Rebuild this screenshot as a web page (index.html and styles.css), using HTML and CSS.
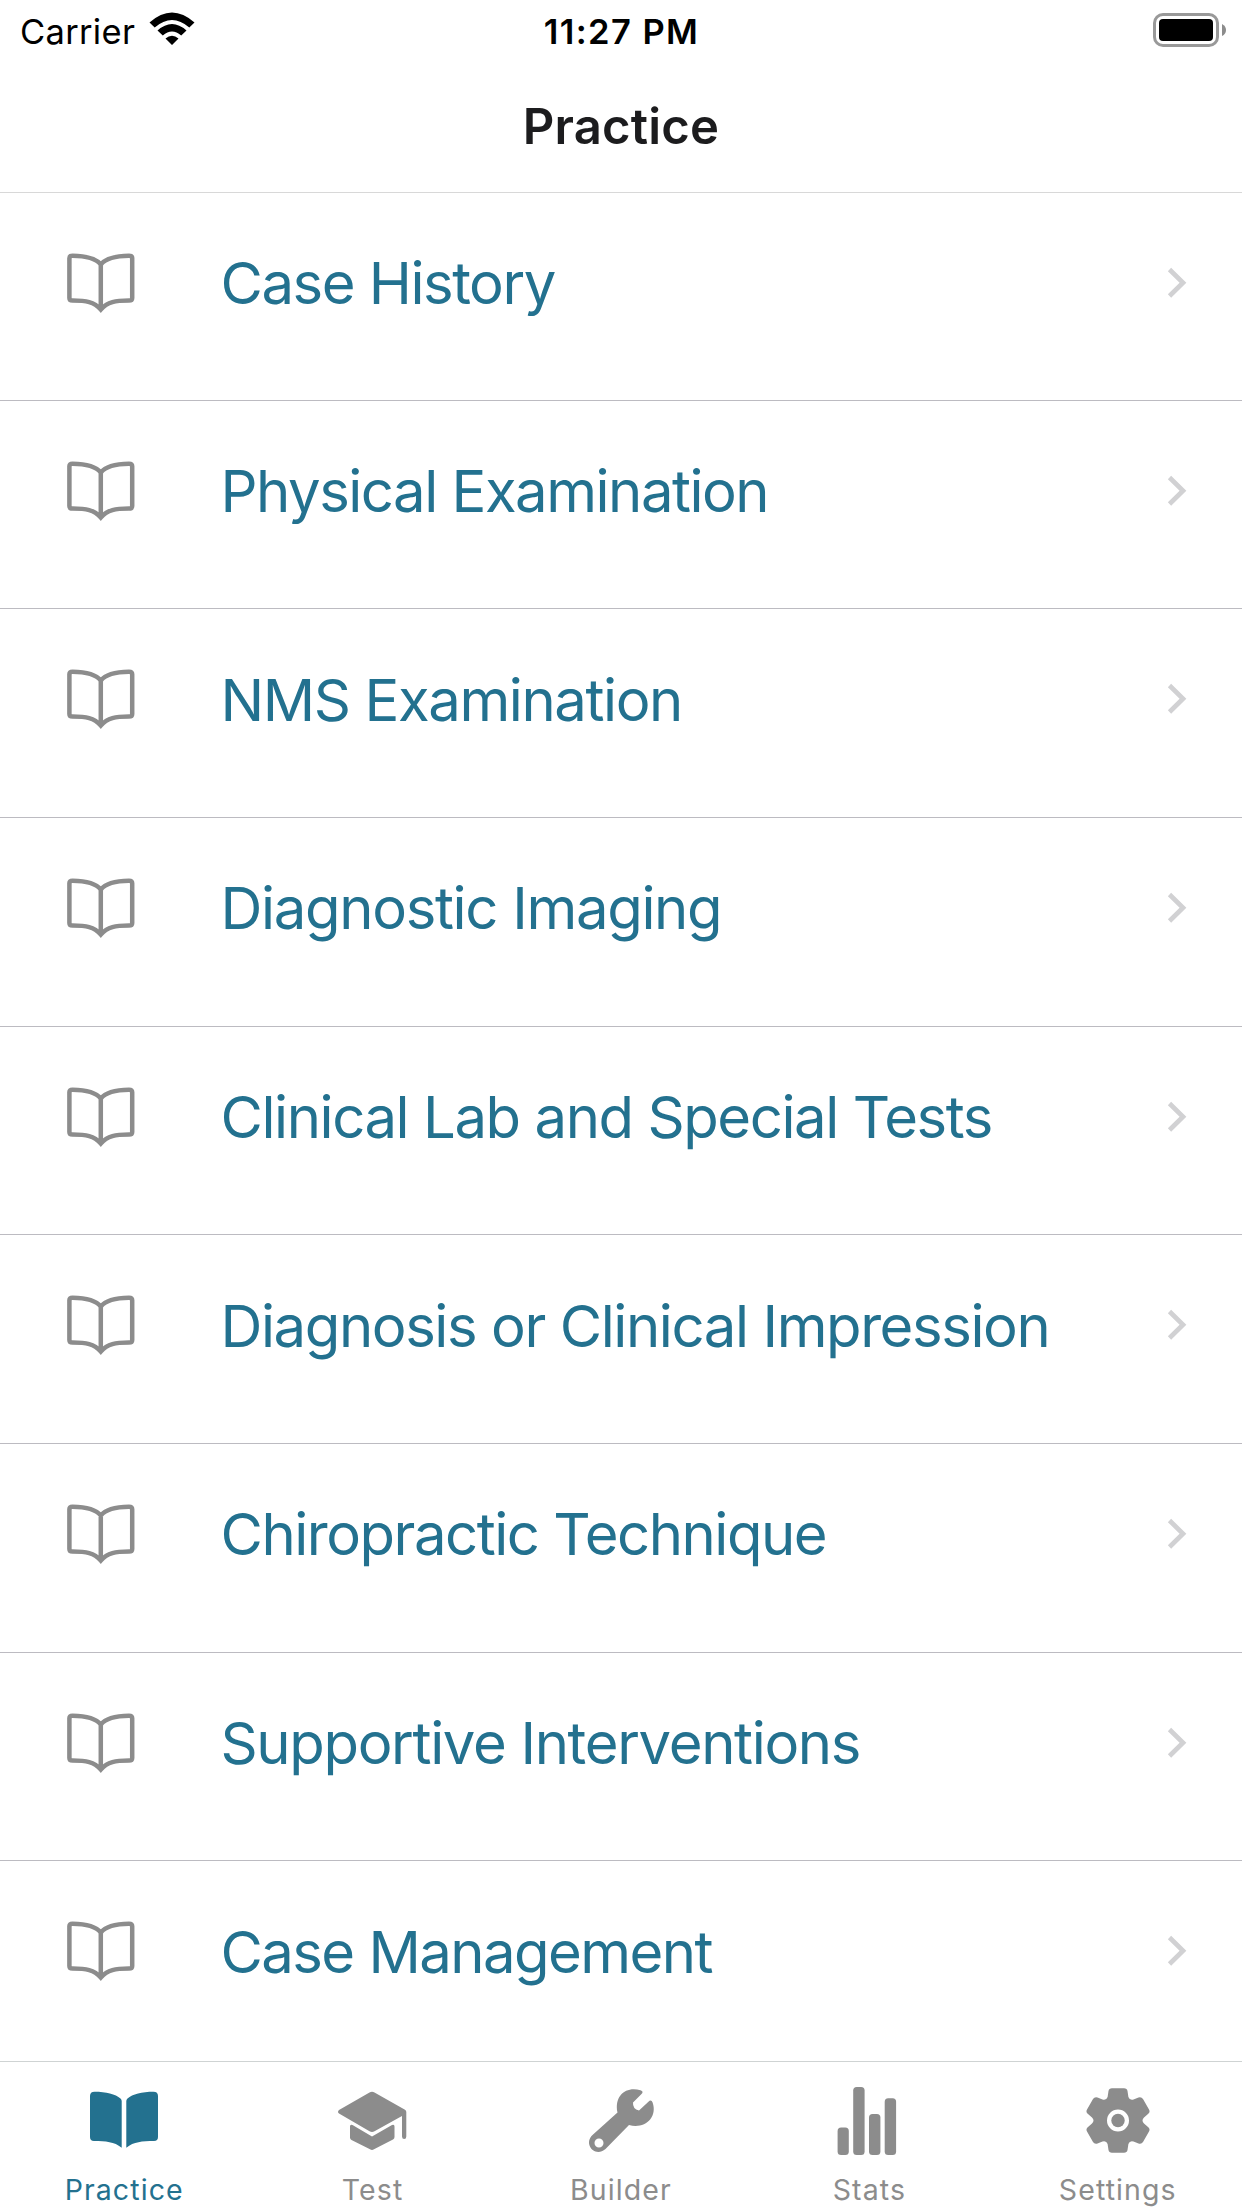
FILE: index.html
```html
<!DOCTYPE html>
<html lang="en">
<head>
<meta charset="utf-8">
<title>Practice</title>
<link rel="stylesheet" href="styles.css">
</head>
<body>
<svg class="defs" aria-hidden="true">
  <symbol id="book" viewBox="0 0 70 62">
    <path d="M34.800 12.500C30 6.500 20 4 6.500 3.800Q3.400 3.800 3.400 6.300V46Q3.400 48.600 6.500 48.600C20 48.600 28 49.600 34.800 57.500C41.600 49.600 49.600 48.600 63 48.600Q66.200 48.600 66.200 46V6.300Q66.200 3.800 63 3.800C49.600 4 39.600 6.500 34.800 12.500V57" fill="none" stroke="currentColor" stroke-width="4.500" stroke-miterlimit="10"/>
  </symbol>
  <symbol id="chevron" viewBox="0 0 20 32">
    <path d="M2.500 2.500L16 15.700L2.500 29" fill="none" stroke="currentColor" stroke-width="4.700"/>
  </symbol>
</svg>
<div class="screen">
  <header class="status">
    <div class="carrier"><span>Carrier</span>
      <svg class="wifi" viewBox="0 0 46 34"><path d="M.5 10.500Q23-9.500 45.500 10.500L40.300 15.600Q23 .5 5.700 15.600ZM8.500 18.500Q23 5.500 37.500 18.500L32.200 23.600Q23 15.500 13.800 23.600ZM16.500 26.500Q23 20.800 29.500 26.500L23 33Z"/></svg>
    </div>
    <div class="time">11:27 PM</div>
    <svg class="battery" viewBox="0 0 74 34"><rect x="1.500" y="1.500" width="63" height="31" rx="8.500" fill="none" stroke="#999" stroke-width="3"/><rect x="6" y="6" width="54" height="22" rx="4"/><path d="M69 11Q73 13 73 17T69 23Z" fill="#8c8c8c"/></svg>
  </header>
  <h1 class="title">Practice</h1>
  <main class="list">
    <a class="row"><svg class="book"><use href="#book"/></svg><span class="label r1">Case History</span><svg class="chevron"><use href="#chevron"/></svg></a>
    <a class="row"><svg class="book"><use href="#book"/></svg><span class="label r2">Physical Examination</span><svg class="chevron"><use href="#chevron"/></svg></a>
    <a class="row"><svg class="book"><use href="#book"/></svg><span class="label r3">NMS Examination</span><svg class="chevron"><use href="#chevron"/></svg></a>
    <a class="row"><svg class="book"><use href="#book"/></svg><span class="label r4">Diagnostic Imaging</span><svg class="chevron"><use href="#chevron"/></svg></a>
    <a class="row"><svg class="book"><use href="#book"/></svg><span class="label r5">Clinical Lab and Special Tests</span><svg class="chevron"><use href="#chevron"/></svg></a>
    <a class="row"><svg class="book"><use href="#book"/></svg><span class="label r6">Diagnosis or Clinical Impression</span><svg class="chevron"><use href="#chevron"/></svg></a>
    <a class="row"><svg class="book"><use href="#book"/></svg><span class="label r7">Chiropractic Technique</span><svg class="chevron"><use href="#chevron"/></svg></a>
    <a class="row"><svg class="book"><use href="#book"/></svg><span class="label r8">Supportive Interventions</span><svg class="chevron"><use href="#chevron"/></svg></a>
    <a class="row"><svg class="book"><use href="#book"/></svg><span class="label r9">Case Management</span><svg class="chevron"><use href="#chevron"/></svg></a>
  </main>
  <nav class="tabs">
    <a class="tab active"><svg class="icon" viewBox="0 0 80 80"><path d="M10.500 11.700C22 11.700 31.500 14 36.500 18.500Q37.700 19.500 37.700 21V67.700C30 61.500 22 61.300 10 61Q6 61 6 57V16Q6 11.700 10.500 11.700ZM69.500 11.700C58 11.700 48.500 14 43.500 18.500Q42.300 19.500 42.300 21V67.700C50 61.500 58 61.300 70 61Q74 61 74 57V16Q74 11.700 69.500 11.700Z"/></svg><span>Practice</span></a>
    <a class="tab"><svg class="icon" viewBox="1 0 80 80"><path d="M37.500 12.500Q40 11 42.500 12.500L73 29.700Q74.300 30.500 74.300 32V56.500Q74.300 59 72.200 59T70 56.500V36L42.500 51.300Q40 52.800 37.500 51.300L7 33.500Q5 32 7 30Z"/><path d="M20.500 45Q18 44 18 46.500V57.500Q18 59 19.500 60L38 69.300Q40 70.500 42 69.300L61 59.500Q62.500 58.500 62.500 57V46.500Q62.500 44 60 45L40 56.500Z"/></svg><span>Test</span></a>
    <a class="tab"><svg class="icon" viewBox="-2 0 80 80"><path fill-rule="evenodd" d="M57.500 10.200Q61 11.500 58.500 14L50 22.500Q49.500 29 56 30.500L66.500 20.700Q68.700 19.800 69.600 22.500C75 38 61 49.500 46 45L22.500 69C12 78 0 64 9.500 55L34.500 32.500C31 15 43.500 6 57.500 10.200ZM16 58.500A4.500 4.500 0 1 0 16 67.500A4.500 4.500 0 1 0 16 58.500Z"/></svg><span>Builder</span></a>
    <a class="tab"><svg class="icon" viewBox="2 0 80 80"><rect x="10.600" y="47.500" width="11.200" height="27.500" rx="3.500"/><rect x="26.200" y="7" width="11.400" height="68" rx="3.500"/><rect x="42" y="34" width="11.400" height="41" rx="3.500"/><rect x="57.700" y="18.300" width="11.400" height="56.700" rx="3.500"/></svg><span>Stats</span></a>
    <a class="tab"><svg class="icon" viewBox="0 0 80 80"><path fill-rule="evenodd" d="M34 8.300H46Q49 8.300 49.500 11L50.400 17Q51.500 20.500 55.500 19.500L60.500 17.500Q63.500 16.700 65 19L71 29.500Q72.500 32 70 34L66 37.500Q63 40.500 66 43.500L70 47Q72.500 49 71 51.500L65 62Q63.500 64.500 60.500 63.500L55.500 61.500Q51.500 60.500 50.400 64L49.500 70Q49 72.700 46 72.700H34Q31 72.700 30.500 70L29.600 64Q28.500 60.500 24.500 61.500L19.500 63.500Q16.500 64.500 15 62L9 51.500Q7.500 49 10 47L14 43.500Q17 40.500 14 37.500L10 34Q7.500 32 9 29.500L15 19Q16.500 16.700 19.500 17.500L24.500 19.500Q28.500 20.500 29.600 17L30.500 11Q31 8.300 34 8.300ZM40 29.500A11 11 0 1 0 40 51.500A11 11 0 1 0 40 29.500Z"/><circle cx="40" cy="40.500" r="6.700"/></svg><span>Settings</span></a>
  </nav>
</div>
</body>
</html>
```
FILE: styles.css
```css
* { box-sizing: border-box; }
body { margin: 0; background: #fff; font-family: Inter, "Liberation Sans", sans-serif; }
.defs { display: none; }
.screen { width: 1242px; height: 2208px; display: flex; flex-direction: column; overflow: hidden; }
.status { height: 60px; flex: none; display: grid; grid-template-columns: 1fr auto 1fr; align-items: center; padding: 2px 15px 0 20px; color: #000; font-size: 34.5px; }
.carrier { display: flex; align-items: center; gap: 14px; letter-spacing: .3px; }
.wifi { width: 46px; height: 34px; margin-top: -4px; }
.time { font-weight: 600; letter-spacing: 1.4px; margin-right: 4px; }
.battery { width: 74px; height: 34px; justify-self: end; margin-top: -3px; }
.title { height: 133px; flex: none; margin: 0; padding-top: 37px; border-bottom: 1px solid #d8d8d8; text-align: center; font-size: 49px; line-height: 60px; font-weight: 600; letter-spacing: .2px; color: #1c1c1e; }
.list { height: 1868px; flex: none; overflow: hidden; }
.row { height: 208.67px; display: flex; align-items: center; padding: 0 55px 28px 66px; border-bottom: 1px solid #bcbbc1; }
.row:first-child { height: 207.8px; padding-bottom: 27px; }
.row:last-child { border-bottom: 0; padding-bottom: 29px; }
.book { width: 70px; height: 62px; color: #8c8c8c; }
.label { flex: 1; margin: 1px 0 0 84.5px; font-size: 58px; line-height: 72px; color: #23718f; white-space: nowrap; }
/* tracking is tuned per label */
.r1 { letter-spacing: -1.47px; }
.r2 { letter-spacing: -1.48px; }
.r3 { letter-spacing: -1.4px; }
.r4 { letter-spacing: -1.32px; }
.r5 { letter-spacing: -1.43px; }
.r6 { letter-spacing: -1.41px; }
.r7 { letter-spacing: -1.47px; }
.r8 { letter-spacing: -1.34px; }
.r9 { letter-spacing: -1.56px; }
.chevron { width: 20px; height: 32px; color: #d1d1d3; }
.tabs { flex: 1; display: grid; grid-template-columns: repeat(5, 1fr); border-top: 1px solid #cfd3d3; }
.tab { display: flex; flex-direction: column; align-items: center; padding-top: 18px; color: #8c8c8c; font-size: 28.5px; line-height: 36px; letter-spacing: 1.1px; }
.tab.active { color: #23718f; }
.icon { width: 80px; height: 80px; fill: currentColor; margin-bottom: 12px; }
```
